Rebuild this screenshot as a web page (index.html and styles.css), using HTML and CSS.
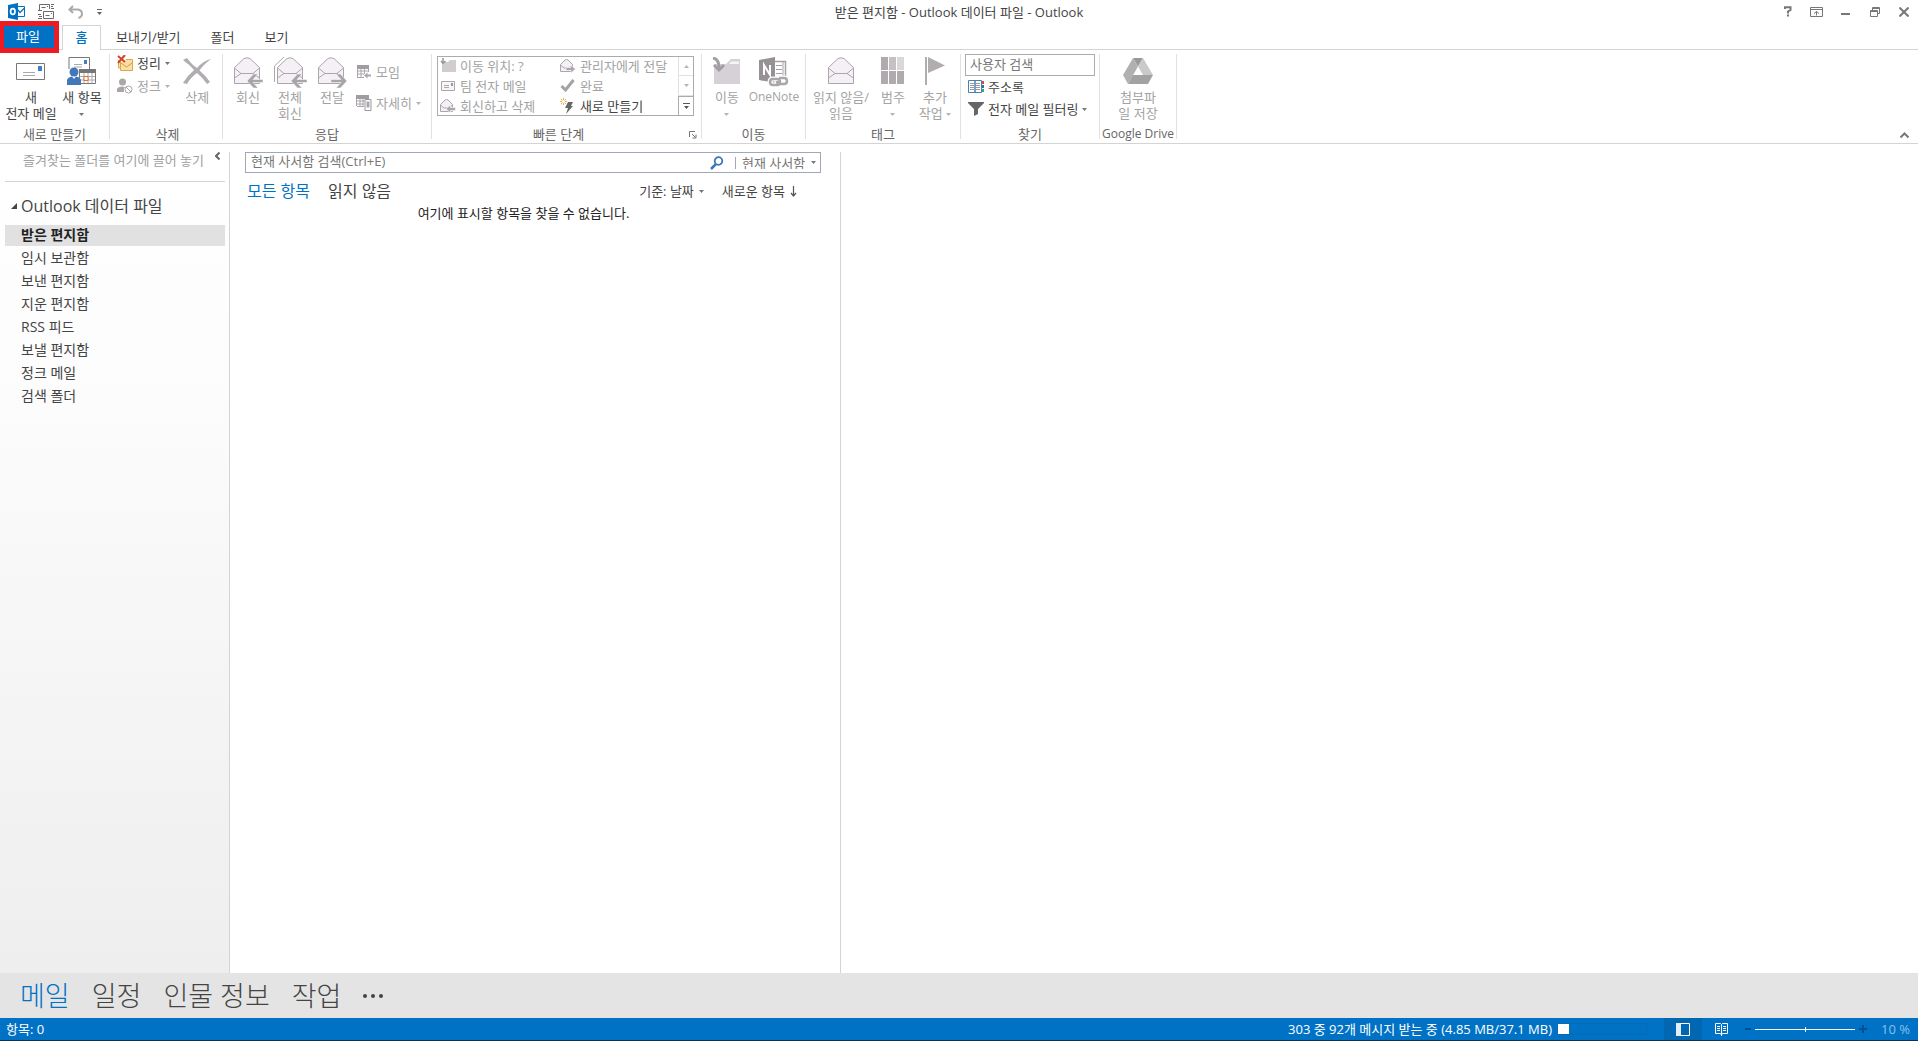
FILE: index.html
```html
<!DOCTYPE html>
<html lang="ko">
<head>
<meta charset="utf-8">
<title>받은 편지함 - Outlook 데이터 파일 - Outlook</title>
<link rel="stylesheet" href="styles.css">
</head>
<body>
<svg class="defs" width="0" height="0" aria-hidden="true">
  <symbol id="caret" viewBox="0 0 5 3"><path d="M0 0h5L2.500 3z" fill="currentColor"/></symbol>
  <symbol id="open-mail" viewBox="0 0 28 28"><path d="M1.500 10.500 11 1.500Q14 0 17 1.500L26.500 10.500V26.500H1.500z" fill="#f4f0f5" stroke="#aaa6aa"/><path d="M1.500 11 8 16.500H20L26.500 11M8 16.500 1.500 21M20 16.500 26.500 21" fill="none" stroke="#aaa6aa"/></symbol>
  <symbol id="arrow-left" viewBox="0 0 16 14"><path d="M0 7 6.500 0H11L6 5.500H16V8.500H6L11 14H6.500z" fill="#a8a4a8" stroke="#fff" stroke-width=".5"/></symbol>
  <symbol id="mini-mail" viewBox="0 0 14 14"><path d="M.5 5.500 5 1Q6.500 0 8 1L12.500 5.500V12.500H.5z" fill="#f4f0f5" stroke="#aaa6aa"/><path d="M.5 6 4 9H9L12.500 6" fill="none" stroke="#aaa6aa"/></symbol>
</svg>

<header class="titlebar">
  <div class="quick">
    <button aria-label="Outlook"><svg width="17" height="17" viewBox="0 0 17 17"><path d="M9 3.500h7.500v10H9z" fill="#fff" stroke="#0072c6"/><path d="M9 6l3 3.500L16.500 5" fill="none" stroke="#0072c6" stroke-width="1.300"/><path d="M0 2 10 0V17L0 15z" fill="#0072c6"/><ellipse cx="4.800" cy="8.500" rx="2.200" ry="2.900" fill="none" stroke="#fff" stroke-width="1.700"/></svg></button>
    <button aria-label="모든 폴더 보내기/받기"><svg width="17" height="16" viewBox="0 0 17 16" fill="none" stroke="#6b6b6b"><path d="M1.500 6V.5H11.500V5M0 6.500h4M3.500 3.500h4M9 2.500h1M13 .5h3M13 2.500h2M13 4.500h3"/><path d="M5.500 7.500h10v7h-10z"/><path d="M7.500 11.500h4M13 9.500h1M0 10.500h3M1 12.500h3M0 14.500h4"/></svg></button>
    <button aria-label="실행 취소"><svg width="16" height="14" viewBox="0 0 16 14"><path d="M5 1 1.500 4.500 5 8M2 4.500H9Q14 4.500 14 9Q14 12 10.500 13" fill="none" stroke="#aaa" stroke-width="2"/></svg></button>
    <button aria-label="빠른 실행 도구 모음 사용자 지정"><svg width="5" height="6" viewBox="0 0 5 6"><path d="M0 0h5v1H0zM0 3h5L2.500 6z" fill="#666"/></svg></button>
  </div>
  <h1>받은 편지함 - Outlook 데이터 파일 - Outlook</h1>
  <div class="window-buttons">
    <button aria-label="도움말"><svg width="8" height="11" viewBox="0 0 8 11"><path d="M1 3V1.200H6.500V4L4 5.500V7.500M3 9.500h2" fill="none" stroke="#777" stroke-width="2"/></svg></button>
    <button aria-label="리본 메뉴 표시 옵션"><svg width="13" height="10" viewBox="0 0 13 10" fill="none" stroke="#777"><path d="M.5.5h12v9H.5zM.5 2.500h12M6.500 8.500V4.500M4 6.500l2.500-2L9 6.500"/></svg></button>
    <button aria-label="최소화"><svg width="9" height="10" viewBox="0 0 9 10"><path d="M0 6h9v2H0z" fill="#777"/></svg></button>
    <button aria-label="이전 크기로 복원"><svg width="10" height="10" viewBox="0 0 10 10" fill="none" stroke="#777"><path d="M.5 3.500h7v6h-7zM0 4.500h8M2.500 3V.5h7v6H8M2 1.500h8"/></svg></button>
    <button aria-label="닫기"><svg width="10" height="10" viewBox="0 0 10 10"><path d="M.5.5l9 9M9.500.5l-9 9" stroke="#777" stroke-width="2"/></svg></button>
  </div>
</header>

<nav class="tabs" aria-label="리본 탭">
  <button class="tab-file">파일</button>
  <button class="tab tab-active">홈</button>
  <button class="tab">보내기/받기</button>
  <button class="tab">폴더</button>
  <button class="tab">보기</button>
</nav>

<div class="ribbon">
  <section class="group group-new">
    <div class="tools">
      <button class="big big-wide"><svg width="30" height="28" viewBox="0 0 30 28"><path d="M.5 6.500h28v16H.5z" fill="#fff" stroke="#777"/><path d="M7 15.500h12M7 18.500h12" stroke="#aaa"/><path d="M22 9h4v5h-4z" fill="#4080c0"/></svg><span>새<br>전자 메일</span></button>
      <button class="big"><svg width="30" height="28" viewBox="0 0 30 28"><path d="M2 12V.5H22.500V12" fill="#fff" stroke="#777"/><path d="M7 7.500h8M7 10h8" stroke="#aaa"/><path d="M17 3h3v4h-3z" fill="#4080c0"/><path d="M12.500 12.500h16v14h-16z" fill="#fff" stroke="#777"/><path d="M12 12h17v4H12z" fill="#777"/><path d="M13 19.500h15M13 23h15M17 16v10M21 16v10M25 16v10" stroke="#aaa"/><path d="M17 19.500h4v4h-4z" fill="#fff" stroke="#e07030"/><circle cx="7" cy="15" r="4.500" fill="#4078b8"/><path d="M0 28V23Q1 20 5 19.500L7 22 9 19.500Q13 20 14 23V28z" fill="#4078b8"/></svg><span>새 항목<br><svg class="caret"><use href="#caret"/></svg></span></button>
    </div>
    <h2>새로 만들기</h2>
  </section>

  <section class="group group-delete">
    <div class="tools">
      <div class="stack">
        <button class="small"><svg width="16" height="16" viewBox="0 0 16 16"><path d="M1.500 5v8H4M3.500 7v8.500H15.500V4.500H9" fill="#f9dfa4" stroke="#e2a64a"/><path d="M4 8l5.500 4L15 8" fill="none" stroke="#d99a3a"/><path d="M1 1l7 6M8 0L1 8" stroke="#d04528" stroke-width="2"/></svg><span>정리</span><svg class="caret"><use href="#caret"/></svg></button>
        <button class="small" disabled><svg width="16" height="16" viewBox="0 0 16 16"><circle cx="5.500" cy="4" r="3.500" fill="#aaa6aa"/><path d="M0 14V11Q1 8.500 5 8.500L8 9Q6 11 7 14z" fill="#aaa6aa"/><circle cx="11.500" cy="11.500" r="3.500" fill="#fff" stroke="#aaa6aa"/><path d="M9 9l5 5" stroke="#aaa6aa"/></svg><span>정크</span><svg class="caret"><use href="#caret"/></svg></button>
      </div>
      <button class="big" disabled><svg width="30" height="28" viewBox="0 0 30 28"><path d="M1 3 5 1Q10 8 15 11Q21 4 29 2Q21 8 17.500 13.500Q23 18 28 25L25 27Q20 20 15 16Q9 20 5 27L1 26Q6 18 12 13Q8 8 1 3z" fill="#b0acb0"/></svg><span>삭제</span></button>
    </div>
    <h2>삭제</h2>
  </section>

  <section class="group group-reply">
    <div class="tools">
      <button class="big" disabled><svg width="30" height="32" viewBox="0 0 30 32"><use href="#open-mail" width="28" height="28"/><use href="#arrow-left" x="14" y="17" width="16" height="14"/></svg><span>회신</span></button>
      <button class="big" disabled><svg width="34" height="32" viewBox="0 0 34 32"><path d="M1.500 25V9L11 0" fill="none" stroke="#aaa6aa"/><use href="#open-mail" x="3" width="28" height="28"/><use href="#arrow-left" x="18" y="17" width="16" height="14"/></svg><span>전체<br>회신</span></button>
      <button class="big" disabled><svg width="30" height="32" viewBox="0 0 30 32"><use href="#open-mail" width="28" height="28"/><use href="#arrow-left" width="16" height="14" transform="translate(30 17) scale(-1 1)"/></svg><span>전달</span></button>
      <div class="stack stack-loose">
        <button class="small" disabled><svg width="16" height="14" viewBox="0 0 16 14"><path d="M1.500 13V1.500h11V7M1.500 12.500H8M2 6h10M2 9h6M5 2v10M8.500 2v7" fill="none" stroke="#aaa6aa"/><path d="M1 0h12v4H1z" fill="#a09ca0"/><path d="M8 10.500l3.500-3v2H15v2h-3.500v2z" fill="#aaa6aa"/></svg><span>모임</span></button>
        <button class="small" disabled><svg width="16" height="16" viewBox="0 0 16 16"><path d="M.5 11V1.500h12M1 11.500h7M1 6h8M1 9h7M4 2v9M7 2v9" fill="none" stroke="#aaa6aa"/><path d="M0 0h13v4H0z" fill="#a09ca0"/><path d="M9 4.500h6v11H9z" fill="#fff" stroke="#999"/><path d="M10.500 6.500h3v6h-3z" fill="#aaa6aa"/></svg><span>자세히</span><svg class="caret"><use href="#caret"/></svg></button>
      </div>
    </div>
    <h2>응답</h2>
  </section>

  <section class="group group-steps">
    <div class="tools">
      <div class="gallery">
        <div class="gallery-items">
          <button class="small" disabled><svg width="16" height="16" viewBox="0 0 16 16"><path d="M2 14V4h6l2-2h6v12z" fill="#d0ccd0"/><path d="M3 0v5M1 3l2 2.500L5.500 3" fill="none" stroke="#999" stroke-width="1.500"/></svg><span>이동 위치: ?</span></button>
          <button class="small" disabled><svg width="16" height="14" viewBox="0 0 16 14"><use href="#mini-mail" width="14" height="14"/><path d="M6 8.500h5V6l4.500 4-4.500 4v-2.500H6z" fill="#aaa6aa" stroke="#fff" stroke-width=".6"/></svg><span>관리자에게 전달</span></button>
          <button class="small" disabled><svg width="16" height="14" viewBox="0 0 16 14"><path d="M1.500 2.500h13v9h-13z" fill="#f8f4f8" stroke="#aaa6aa"/><path d="M4 6.500h5M4 8.500h5" stroke="#aaa6aa"/><path d="M11 4h2v3h-2z" fill="#999"/></svg><span>팀 전자 메일</span></button>
          <button class="small" disabled><svg width="16" height="14" viewBox="0 0 16 14"><path d="M1.500 7 5.500 11 13.500 1" fill="none" stroke="#a5a1a5" stroke-width="3"/></svg><span>완료</span></button>
          <button class="small" disabled><svg width="16" height="14" viewBox="0 0 16 14"><use href="#mini-mail" width="14" height="14"/><path d="M15.500 8.500h-5V6L6 10l4.500 4v-2.500h5z" fill="#aaa6aa" stroke="#fff" stroke-width=".6"/></svg><span>회신하고 삭제</span></button>
          <button class="small"><svg width="16" height="16" viewBox="0 0 16 16"><path d="M8 4h5l-2 4h2L6 16 8 10H5z" fill="#666"/><path d="M3.500 0v7M0 3.500h7M1 1l5 5M6 1L1 6" stroke="#e8b050"/><circle cx="3.500" cy="3.500" r="1.500" fill="#fff"/></svg><span>새로 만들기</span></button>
        </div>
        <div class="gallery-scroll">
          <button disabled aria-label="위로"><svg class="caret flip"><use href="#caret"/></svg></button>
          <button disabled aria-label="아래로"><svg class="caret"><use href="#caret"/></svg></button>
          <button class="more" aria-label="자세히"><svg width="7" height="6" viewBox="0 0 7 6"><path d="M0 0h7v1H0zM1 3h5L3.500 6z" fill="#555"/></svg></button>
        </div>
      </div>
    </div>
    <h2>빠른 단계</h2>
    <button class="launcher" aria-label="빠른 단계 관리"><svg width="8" height="8" viewBox="0 0 8 8"><path d="M.5 6V.5H6M3 3l3.500 3.500M7 3.500V7H3.500" fill="none" stroke="#777"/></svg></button>
  </section>

  <section class="group group-move">
    <div class="tools">
      <button class="big" disabled><svg width="30" height="28" viewBox="0 0 30 28"><path d="M2 27V7H14L19 2H28V27z" fill="#d6d1d6"/><path d="M19 4.500h8V7H17z" fill="#f7f4f7"/><path d="M1 1Q7 2 7 11M2 8l5 5 5-5" fill="none" stroke="#a29ea2" stroke-width="3"/></svg><span>이동<br><svg class="caret"><use href="#caret"/></svg></span></button>
      <button class="big big-one" disabled><svg width="30" height="32" viewBox="0 0 30 32"><path d="M15 4.500H26.500V21H15" fill="#fff" stroke="#a5a1a5" stroke-width="1.500"/><path d="M17 8.500h6M17 12.500h6M17 16.500h6M24 4v16" stroke="#a5a1a5"/><path d="M0 3 16 0V26L0 23z" fill="#959195"/><path d="M5 18V8L11 18V8" fill="none" stroke="#fff" stroke-width="2"/><g fill="none"><path d="M14 22h4q3 0 3 3t-3 3h-4q-3 0-3-3t3-3zM22 21h3q3 0 3 3t-3 3h-4q-3 0-3-3" stroke="#fff" stroke-width="5"/><path d="M14 22h4q3 0 3 3t-3 3h-4q-3 0-3-3t3-3zM20 21h5q3 0 3 3t-3 3h-4q-3 0-3-3" stroke="#aaa6aa" stroke-width="2.500"/></g></svg><span class="latin">OneNote</span></button>
    </div>
    <h2>이동</h2>
  </section>

  <section class="group group-tags">
    <div class="tools">
      <button class="big big-read" disabled><svg width="28" height="28"><use href="#open-mail"/></svg><span>읽지 않음/<br>읽음</span></button>
      <button class="big" disabled><svg width="24" height="28" viewBox="0 0 24 28"><path d="M0 0h7v13H0zM0 14h7v13H0zM8 14h7v13H8zM16 14h7v13h-7z" fill="#aeaaae"/><path d="M8 0h7v13H8z" fill="#c4c0c4"/><path d="M16 0h7v13h-7z" fill="#dad6da"/></svg><span>범주<br><svg class="caret"><use href="#caret"/></svg></span></button>
      <button class="big" disabled><svg width="22" height="28" viewBox="0 0 22 28"><path d="M1 0h2v28H1z" fill="#b0acb0"/><path d="M4 0 21 8.500 4 16z" fill="#b0acb0"/></svg><span>추가<br>작업 <svg class="caret"><use href="#caret"/></svg></span></button>
    </div>
    <h2>태그</h2>
  </section>

  <section class="group group-find">
    <div class="tools find">
      <input type="text" class="people" placeholder="사용자 검색" aria-label="사용자 검색">
      <button class="small"><svg width="16" height="14" viewBox="0 0 16 14"><path d="M.5.5H7V12.500H.5zM7 .5H13.500V12.500H7z" fill="#fff" stroke="#4a7fb0"/><path d="M2 3.500h4M2 5.500h4M2 7.500h4M2 9.500h4M8 3.500h4M8 5.500h4M8 7.500h4M8 9.500h4" stroke="#999"/><path d="M14 1h2v3h-2z" fill="#d05030"/><path d="M14 5h2v3h-2z" fill="#3070b0"/><path d="M14 9h2v3h-2z" fill="#40a070"/></svg><span>주소록</span></button>
      <button class="small"><svg width="16" height="14" viewBox="0 0 16 14"><path d="M0 0h16v1L10 7v5l-4 2V7L0 1z" fill="#666"/></svg><span>전자 메일 필터링</span><svg class="caret"><use href="#caret"/></svg></button>
    </div>
    <h2>찾기</h2>
  </section>

  <section class="group group-drive">
    <div class="tools">
      <button class="big big-wide" disabled><svg width="30" height="28" viewBox="0 0 30 28"><path d="M10 1H20L15 9.500z" fill="#999"/><path d="M10 1 15 9.500 5 27 0 18z" fill="#b0b0b0"/><path d="M20 1 30 18H20L15 9.500z" fill="#cacaca"/><path d="M10 18H30L25 27H5z" fill="#a2a2a2"/><path d="M15 10.500 19 18H11z" fill="#fff"/></svg><span>첨부파<br>일 저장</span></button>
    </div>
    <h2 class="latin">Google Drive</h2>
  </section>
  <button class="collapse" aria-label="리본 메뉴 축소"><svg width="9" height="6" viewBox="0 0 9 6"><path d="M.5 5.500l4-4 4 4" fill="none" stroke="#777" stroke-width="2"/></svg></button>
</div>

<main class="workspace">
  <aside class="folders">
    <div class="favorites"><span>즐겨찾는 폴더를 여기에 끌어 놓기</span><button aria-label="폴더 창 최소화"><svg width="5" height="8" viewBox="0 0 5 8"><path d="M4.500.5 1 4l3.500 3.500" fill="none" stroke="#666" stroke-width="2"/></svg></button></div>
    <h2><svg width="6" height="6" viewBox="0 0 6 6"><path d="M6 0v6H0z" fill="#444"/></svg>Outlook 데이터 파일</h2>
    <ul>
      <li><a href="#inbox" class="current">받은 편지함</a></li>
      <li><a href="#drafts">임시 보관함</a></li>
      <li><a href="#sent">보낸 편지함</a></li>
      <li><a href="#deleted">지운 편지함</a></li>
      <li><a href="#rss">RSS 피드</a></li>
      <li><a href="#outbox">보낼 편지함</a></li>
      <li><a href="#junk">정크 메일</a></li>
      <li><a href="#search">검색 폴더</a></li>
    </ul>
  </aside>
  <section class="messages">
    <div class="search">
      <input type="text" placeholder="현재 사서함 검색(Ctrl+E)" aria-label="현재 사서함 검색">
      <button aria-label="검색"><svg width="14" height="14" viewBox="0 0 14 14"><circle cx="8.500" cy="5" r="3.800" fill="none" stroke="#3b78b5" stroke-width="1.800"/><path d="M6 8 1 13" stroke="#3b78b5" stroke-width="2.500"/></svg></button>
      <select aria-label="검색 범위"><option>현재 사서함</option></select>
      <svg class="caret"><use href="#caret"/></svg>
    </div>
    <div class="filters">
      <button class="filter filter-on">모든 항목</button>
      <button class="filter">읽지 않음</button>
      <button class="sort sort-by">기준: 날짜<svg class="caret"><use href="#caret"/></svg></button>
      <button class="sort">새로운 항목<svg width="7" height="11" viewBox="0 0 7 11"><path d="M3.500 0v10M1 7l2.500 3L6 7" fill="none" stroke="#555" stroke-width="1.200"/></svg></button>
    </div>
    <p>여기에 표시할 항목을 찾을 수 없습니다.</p>
  </section>
  <section class="reading" aria-label="읽기 창"></section>
</main>

<nav class="modules" aria-label="탐색 모음">
  <a href="#mail" class="module-on">메일</a>
  <a href="#calendar">일정</a>
  <a href="#people">인물 정보</a>
  <a href="#tasks">작업</a>
  <button aria-label="더 보기"><svg width="20" height="4" viewBox="0 0 20 4"><circle cx="2" cy="2" r="2"/><circle cx="10" cy="2" r="2"/><circle cx="18" cy="2" r="2"/></svg></button>
</nav>

<footer class="status">
  <span class="count">항목: 0</span>
  <span>303 중 92개 메시지 받는 중 (4.85 MB/37.1 MB)</span>
  <div class="progress" role="progressbar" aria-label="받는 중" aria-valuenow="11"><div style="width:12%"></div></div>
  <button class="view view-on" aria-label="기본 보기"><svg width="14" height="13" viewBox="0 0 14 13"><path d="M.5.5h13v12H.5z" fill="none" stroke="#fff"/><path d="M0 0h5v13H0z" fill="#e4eef8"/></svg></button>
  <button class="view" aria-label="읽기용 보기"><svg width="13" height="13" viewBox="0 0 13 13" fill="none" stroke="#fff"><path d="M.5.5H5.500L6.500 1.500 7.500.5H12.500V10.500H7.500L6.500 12 5.500 10.500H.5zM6.500 1.500V13M2 3.500h3M2 5.500h3M2 7.500h3M8 3.500h3M8 5.500h3M8 7.500h3"/></svg></button>
  <div class="zoom">
    <button aria-label="축소"><svg width="6" height="8" viewBox="0 0 6 8"><path d="M0 3h6v2H0z" fill="#00508f"/></svg></button>
    <input type="range" min="0" max="100" value="50" aria-label="확대/축소">
    <button aria-label="확대"><svg width="8" height="8" viewBox="0 0 8 8"><path d="M0 3h8v2H0zM3 0h2v8H3z" fill="#00508f"/></svg></button>
  </div>
  <span class="percent">10 %</span>
</footer>
</body>
</html>
```
FILE: styles.css
```css
* { box-sizing: border-box; }

body {
  margin: 0;
  min-height: 100vh;
  display: flex;
  flex-direction: column;
  background: #fff;
  color: #444;
  font: 13px/16px "Open Sans", "Noto Sans CJK KR", sans-serif;
}

h1, h2, p, ul { margin: 0; padding: 0; font-size: 13px; font-weight: 400; }
ul { list-style: none; }
a { color: inherit; text-decoration: none; }
button, input, select { margin: 0; padding: 0; border: 0; background: none; color: inherit; font: inherit; border-radius: 0; outline: 0; }
button:disabled { color: #a3a3a3; }
svg { flex: none; }
.defs { position: absolute; }
.caret { width: 5px; height: 3px; vertical-align: middle; color: #777; }
button:disabled .caret { color: #b4b4b4; }
.flip { transform: rotate(180deg); }
.latin { font-size: 12px; }

/* Title bar */
.titlebar { display: grid; grid-template-columns: 1fr auto 1fr; height: 25px; align-items: center; padding-bottom: 2px; }
.quick { display: flex; align-items: center; gap: 13px; padding: 0 8px; height: 22px; }
.quick button, .window-buttons button { display: flex; align-items: center; justify-content: center; }
.window-buttons { display: flex; justify-content: flex-end; height: 22px; }
.window-buttons button { width: 29px; }

/* Tabs */
.tabs { display: flex; height: 25px; border-bottom: 1px solid #d4d4d4; }
.tab-file { position: relative; width: 50px; height: 22px; margin: 1px 8px 0 4px; padding: 0 2px 2px 0; background: #0072c6; color: #fff; }
.tab-file::after { content: ""; position: absolute; z-index: 1; inset: -5px -5px -5px -4px; border: 5px solid #ed1c24; border-left-width: 4px; }
.tab { height: 24px; padding: 0 15px 1px; }
.tab-active { height: 25px; width: 39px; padding: 0 0 2px; border: 1px solid #d4d4d4; border-bottom: 0; background: #fff; color: #0072c6; font-weight: 500; }

/* Ribbon */
.ribbon { display: flex; height: 94px; border-bottom: 1px solid #d4d4d4; }
.group { position: relative; display: flex; flex-direction: column; margin: 4px 0; padding: 0 4px; border-right: 1px solid #e1e1e1; }
.group h2 { text-align: center; color: #666; white-space: nowrap; margin: 0 -4px; line-height: 12px; }
.group-new { width: 110px; padding: 0 1px; }
.group-delete { width: 113px; padding-left: 7px; }
.group-reply { width: 209px; }
.group-steps { width: 270px; }
.group-steps h2 { padding-right: 16px; }
.group-move { width: 104px; }
.group-tags { width: 155px; }
.group-find { width: 139px; }
.group-drive { width: 77px; }
.group h2.latin { font-size: 12px; }
.tools { display: flex; flex: none; height: 74px; }
.big { display: flex; flex-direction: column; align-items: center; width: 42px; padding: 3px 0 5px; white-space: nowrap; }
.big > svg { margin-bottom: auto; }
.big > span { height: 34px; }
.big-wide { width: 60px; }
.group-drive .big-wide { width: 68px; }
.big-one { width: 52px; }
.big-read { width: 62px; }
.stack { display: flex; flex-direction: column; gap: 7px; width: 60px; padding-top: 1px; }
.stack-loose { gap: 15px; width: 68px; padding: 10px 0 0 3px; }
.small { display: flex; align-items: center; gap: 4px; height: 16px; white-space: nowrap; }

.gallery { display: flex; width: 257px; height: 60px; margin: 2px 0 0 1px; border: 1px solid #ababab; }
.gallery-items { flex: 1; display: grid; grid-template-columns: 120px 1fr; grid-auto-rows: 20px; align-items: center; margin-top: -1px; padding-left: 2px; height: 58px; }
.gallery-scroll { display: flex; flex-direction: column; width: 15px; border-left: 1px solid #e1e1e1; }
.gallery-scroll button { display: flex; flex: 1; align-items: center; justify-content: center; border-bottom: 1px solid #e1e1e1; }
.gallery-scroll .more { margin: 0 -1px -1px; border: 1px solid #ababab; }
.launcher { position: absolute; right: 4px; bottom: 0; display: flex; }

.find { flex-direction: column; }
.people { width: 130px; height: 22px; padding: 0 4px 3px; border: 1px solid #ababab; }
.find .small { height: 22px; padding-left: 3px; }
.collapse { margin: auto 9px 5px auto; display: flex; }
::placeholder { color: #777; opacity: 1; }

/* Panes */
.workspace { flex: 1; display: flex; }
.folders { width: 229px; padding: 8px 4px 0 5px; background: linear-gradient(#fff, #fcfcfc 30%, #eee); }
.favorites { display: flex; justify-content: space-between; align-items: flex-start; height: 30px; padding-left: 18px; border-bottom: 1px solid #d4d4d4; color: #a0a0a0; }
.favorites button { display: flex; padding-right: 5px; }
.folders h2 { display: flex; align-items: center; gap: 4px; height: 43px; padding: 4px 0 0 6px; font-size: 16px; }
.folders ul { display: grid; gap: 2px; font-size: 14px; }
.folders li a { display: block; height: 21px; line-height: 20px; padding-left: 16px; }
.folders .current { background: #e1e1e1; color: #222; font-weight: 700; }

.messages { width: 612px; margin-top: 8px; padding: 0 19px 0 15px; border: solid #d4d4d4; border-width: 0 1px; }
.search { display: flex; align-items: center; height: 21px; padding-right: 4px; border: 1px solid #a0a8b8; color: #777; }
.search input { flex: 1; height: 19px; padding: 0 0 3px 5px; }
.search button { display: flex; margin-right: 11px; }
.search select { appearance: none; height: 12px; line-height: 12px; width: 76px; padding-left: 6px; border-left: 1px solid #a0a8b8; overflow: visible; }
.filters { display: flex; align-items: center; height: 32px; padding: 4px 24px 0 2px; }
.filter { margin-right: 18px; font-size: 16px; }
.filter-on { color: #0072c6; }
.sort { display: flex; align-items: center; gap: 5px; }
.sort-by { margin: 0 18px 0 auto; }
.messages p { text-align: center; color: #222; margin-right: 19px; }
.reading { flex: 1; }

/* Module bar */
.modules { display: flex; align-items: center; gap: 22px; height: 45px; padding-left: 20px; background: #e4e4e4; font-size: 27px; line-height: 40px; font-weight: 300; }
.module-on { color: #0072c6; }
.modules svg { display: block; fill: #444; }

/* Status bar */
.status { display: flex; align-items: center; height: 23px; padding: 0 8px 0 6px; background: #0072c6; border-bottom: 1px solid #10304e; color: #fff; }
.count { margin-right: auto; }
.progress { width: 90px; height: 12px; margin: 0 17px 0 5px; border: 1px solid #0a68b4; }
.progress div { height: 10px; background: #fff; }
.view { display: flex; align-items: center; justify-content: center; width: 38px; height: 22px; }
.view-on { background: #0067b0; }
.zoom { display: flex; align-items: center; gap: 4px; margin: 0 14px 0 5px; }
.zoom button { display: flex; }
.zoom input { appearance: none; width: 100px; height: 6px; background: linear-gradient(#fff, #fff) center / 100% 1px no-repeat; }
.zoom input::-webkit-slider-thumb { appearance: none; width: 1px; height: 5px; background: #fff; }
.percent { color: #8cc0e8; }
```
